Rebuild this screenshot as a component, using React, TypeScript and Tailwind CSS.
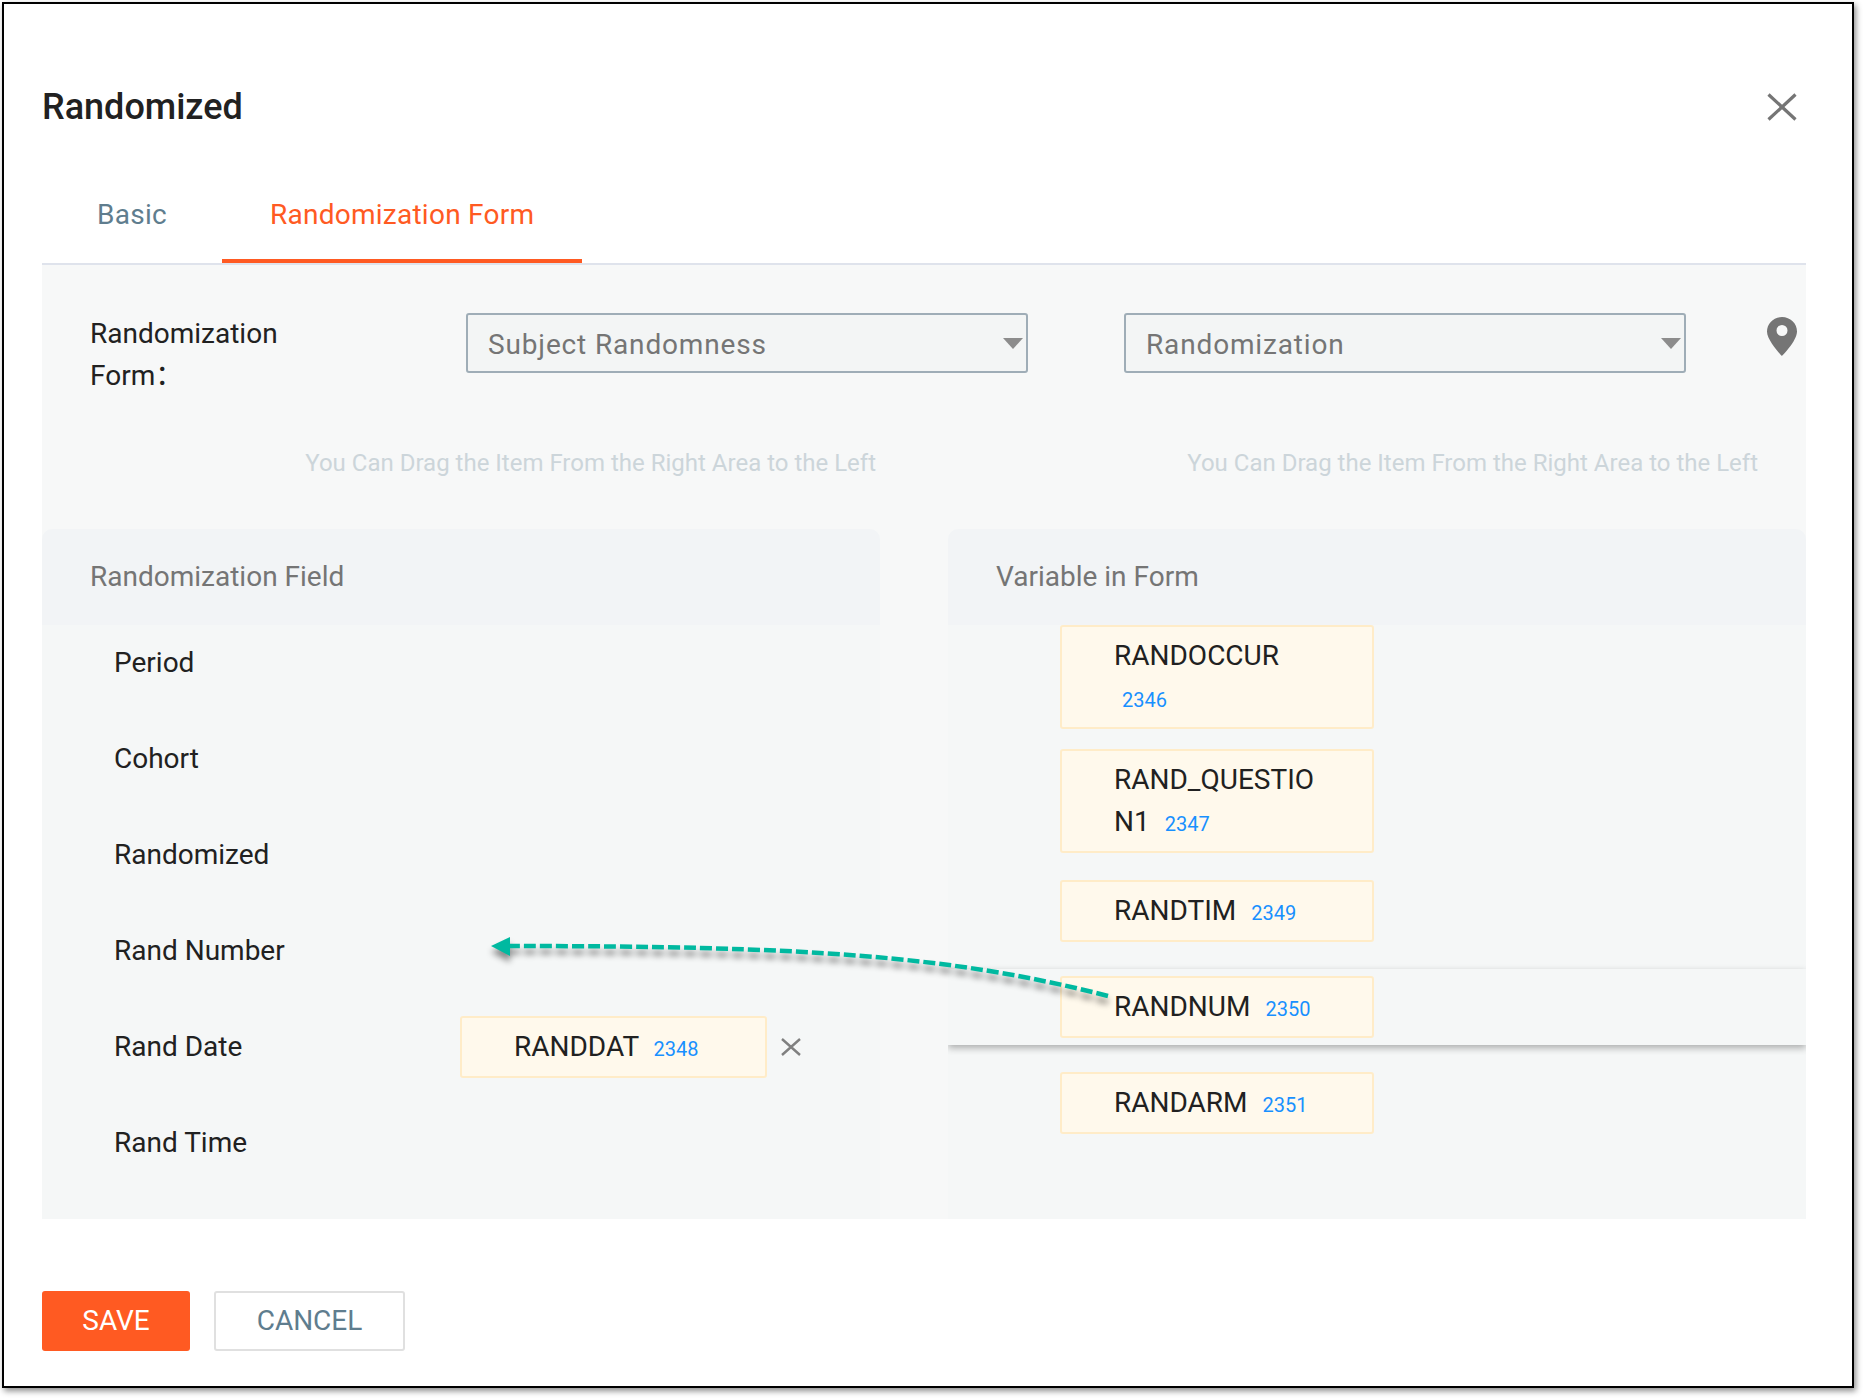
const roboto = "font-['Roboto',sans-serif]"

const Caret = () => (
  <svg width="20" height="11" viewBox="0 0 20 11" className="shrink-0">
    <polygon points="0,0 20,0 10,11" fill="#8c8c8c" />
  </svg>
)

const Select = ({ label, className }: { label: string; className: string }) => (
  <div
    className={`flex h-[60px] shrink-0 items-center justify-between rounded-[3px] border-2 border-[#9fadb7] bg-[#f3f5f5] pl-[20px] pr-[3px] ${className}`}
  >
    <span className="pt-[3px] text-[28px] tracking-[0.85px] text-[#757575]">{label}</span>
    <Caret />
  </div>
)

const VariableCard = ({
  name,
  id,
  className,
}: {
  name: string
  id: string
  className: string
}) => (
  <div
    className={`shrink-0 break-all rounded-[3px] border-2 border-[#ffecc8] bg-[#fff9ec] px-[52px] py-[8px] text-[28px] leading-[42px] text-[#212121] ${className}`}
  >
    {name}{' '}
    <span className="ml-[8px] inline-block text-[20px] leading-none text-[#1890ff]">{id}</span>
  </div>
)

const fields = ['Period', 'Cohort', 'Randomized', 'Rand Number', 'Rand Date', 'Rand Time']

export default function App() {
  return (
    <div className={`relative h-[1398px] w-[1864px] overflow-hidden bg-white pl-[2px] pt-[2px] ${roboto}`}>
      <div className="h-[1386px] w-[1852px] border-2 border-black pl-[38px] shadow-[2px_3px_6px_rgba(0,0,0,0.45)]">
        <div className="flex h-[125px] w-[1755px] items-end justify-between">
          <h1 className="text-[36px] font-medium leading-[44px] text-[#212121]">Randomized</h1>
          <svg width="30" height="28" viewBox="0 0 30 28" className="mb-[8px]">
            <path d="M1.5 1.5 L28.5 26.5 M28.5 1.5 L1.5 26.5" stroke="#757575" strokeWidth="3.2" fill="none" />
          </svg>
        </div>

        <div className="mt-[46px] flex h-[90px] w-[1764px] border-b-2 border-[#dfe3ec] text-[28px] tracking-[0.25px]">
          <div className="flex w-[180px] items-center pb-[8px] pl-[55px] text-[#5f7d8e]">Basic</div>
          <div className="flex h-[88px] w-[360px] items-center border-b-4 border-[#ff5a22] pb-[4px] pl-[48px] text-[#ff5a22]">
            Randomization Form
          </div>
        </div>

        <div className="h-[954px] w-[1764px] bg-[#f7f8f8]">
          <div className="flex pt-[48px]">
            <div className="h-[84px] w-[424px] shrink-0 pl-[48px] text-[28px] leading-[42px] text-[#212121]">
              Randomization
              <br />
              Form<span className="font-['Noto_Sans_CJK_SC',sans-serif] leading-none">：</span>
            </div>
            <Select label="Subject Randomness" className="w-[562px]" />
            <Select label="Randomization" className="ml-[96px] w-[562px]" />
            <svg width="30" height="39" viewBox="0 0 30 39" className="ml-[81px] mt-[4px] shrink-0">
              <path
                fillRule="evenodd"
                d="M15 0C6.7 0 0 6.4 0 14.5C0 24 15 39 15 39S30 24 30 14.5C30 6.4 23.3 0 15 0ZM15 19a5.5 5.5 0 1 1 0-11a5.5 5.5 0 0 1 0 11Z"
                fill="#757575"
              />
            </svg>
          </div>

          <div className="mt-[45px] grid grid-cols-[838px_858px] gap-x-[68px]">
            <div className="flex h-[777px] flex-col">
              <p className="pr-[4px] text-right text-[24px] leading-[42px] text-[#ccd5da]">
                You Can Drag the Item From the Right Area to the Left
              </p>
              <div className="mt-[45px] flex h-[96px] shrink-0 items-center rounded-t-[10px] bg-[#f2f4f6] pl-[48px] text-[28px] text-[#757575]">
                Randomization Field
              </div>
              <div className="flex grow flex-col gap-[34px] bg-[#f5f7f7] pl-[72px] pt-[7px] text-[28px] text-[#212121]">
                {fields.map((field) => (
                  <div key={field} className="flex h-[62px] items-center">
                    <span className="w-[346px] shrink-0">{field}</span>
                    {field === 'Rand Date' && (
                      <>
                        <VariableCard name="RANDDAT" id="2348" className="w-[307px]" />
                        <svg width="20" height="18" viewBox="0 0 20 18" className="ml-[14px]">
                          <path d="M1 1 L19 17 M19 1 L1 17" stroke="#808080" strokeWidth="2.4" fill="none" />
                        </svg>
                      </>
                    )}
                  </div>
                ))}
              </div>
            </div>

            <div className="flex h-[777px] flex-col">
              <p className="pr-[48px] text-right text-[24px] leading-[42px] text-[#ccd5da]">
                You Can Drag the Item From the Right Area to the Left
              </p>
              <div className="mt-[45px] flex h-[96px] shrink-0 items-center rounded-t-[10px] bg-[#f2f4f6] pl-[48px] text-[28px] text-[#757575]">
                Variable in Form
              </div>
              <div className="grow bg-[#f5f7f7]">
                <VariableCard name="RANDOCCUR" id="2346" className="ml-[112px] w-[314px]" />
                <VariableCard name="RAND_QUESTION1" id="2347" className="ml-[112px] mt-[20px] w-[314px]" />
                <VariableCard name="RANDTIM" id="2349" className="ml-[112px] mt-[27px] w-[314px]" />
                <div className="mt-[27px] py-[7px] shadow-[0_3px_7px_rgba(0,0,0,0.3)] [clip-path:inset(-10px_0)]">
                  <VariableCard name="RANDNUM" id="2350" className="ml-[112px] w-[314px]" />
                </div>
                <VariableCard name="RANDARM" id="2351" className="ml-[112px] mt-[27px] w-[314px]" />
              </div>
            </div>
          </div>
        </div>

        <div className="mt-[72px] flex gap-[24px] text-[28px]">
          <button className="h-[60px] w-[148px] rounded-[3px] bg-[#ff5a22] text-white">SAVE</button>
          <button className="h-[60px] w-[191px] rounded-[3px] border-2 border-[#e0e0e0] bg-white text-[#5f7d8e]">
            CANCEL
          </button>
        </div>
      </div>

      <svg
        width="1864"
        height="1398"
        viewBox="0 0 1864 1398"
        className="pointer-events-none absolute left-0 top-0 drop-shadow-[0_6px_3px_rgba(0,0,0,0.45)]"
      >
        <path
          d="M1108 996C950 955 800 946 510 946"
          fill="none"
          stroke="#00b9a0"
          strokeWidth="4.5"
          strokeDasharray="12 4"
        />
        <polygon points="491,946 510,937 510,956" fill="#00b9a0" />
      </svg>
    </div>
  )
}
